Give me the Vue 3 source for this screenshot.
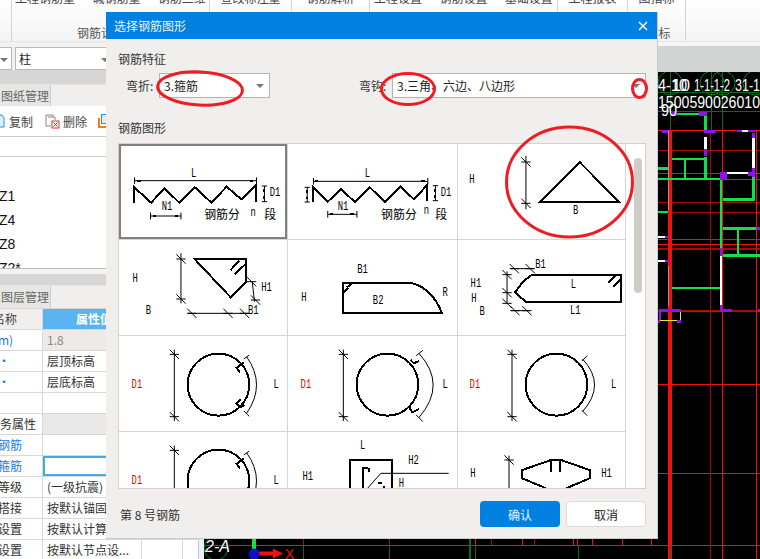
<template>
  <div class="app">
    <!-- ribbon -->
    <div class="ribbon">
      <div v-for="g in ribbon" :key="g.cls" class="rgroup" :class="g.cls">
        <div class="rtop">{{ g.top }}</div>
        <div class="rlabel">{{ g.label }}</div>
      </div>
    </div>

    <div class="main">
      <!-- left panel -->
      <div class="side">
        <div class="selects">
          <div class="sbox first"><i class="caret"></i></div>
          <div class="sbox second">柱<i class="caret"></i></div>
        </div>
        <div class="band"></div>
        <div class="tabrow"><div class="tab">图纸管理</div></div>
        <div class="tools">
          <svg class="ticon" width="5" height="14" viewBox="0 0 5 14"><path d="M-4 1H2L4 4V13H-4Z" fill="#dff0fb" stroke="#2a8fd0"/></svg>
          <span class="tlabel copy">复制</span>
          <svg class="ticon del" width="15" height="15" viewBox="0 0 15 15">
            <path d="M1 1H8V3H10V6M1 1V12H6M3 3H8" fill="none" stroke="#888"/>
            <rect x="7" y="7" width="7" height="7" fill="#fff" stroke="#d33"/>
            <path d="M8.5 8.5L12.500 12.500M12.500 8.5L8.500 12.500" stroke="#d33"/>
          </svg>
          <span class="tlabel">删除</span>
          <svg class="ticon next" width="9" height="14" viewBox="0 0 9 14">
            <path d="M1 4V13H8" fill="none" stroke="#f08010" stroke-width="2"/>
            <rect x="3.500" y="0.500" width="6" height="9" fill="#dff0fb" stroke="#2a8fd0"/>
          </svg>
        </div>
        <div class="blank"></div>
        <div class="list">
          <div v-for="n in names" :key="n" class="litem">{{ n }}</div>
        </div>
        <div class="listend"></div>
        <div class="band small"></div>
        <div class="tabrow second"><div class="tab">图层管理</div></div>
        <div class="table">
          <div v-for="(r, i) in rows" :key="i" class="trow" :class="r.cls">
            <div class="c1" :class="r.c1">{{ r.a }}</div>
            <div class="c2" :class="r.c2">{{ r.b }}</div>
            <div class="c3"></div>
            <div class="c4"></div>
          </div>
        </div>
      </div>

      <div class="gap"></div>

      <!-- drawing area -->
      <div class="right">
        <div class="strip"></div>
        <svg class="canvas" width="556" height="487" viewBox="204 72 556 487">
          <circle v-for="c in hex" :key="c[0]" :cx="c[0]" :cy="c[1]" r="12" fill="none" stroke="#0c7a1c" />
          <line v-for="(l, i) in lines" :key="'l' + i" :x1="l[0]" :y1="l[1]" :x2="l[2]" :y2="l[3]" :stroke="l[4]" :stroke-width="l[5] || 1" shape-rendering="crispEdges" />
          <rect v-for="(r, i) in blocks" :key="'r' + i" :x="r[0]" :y="r[1]" :width="r[2] - r[0]" :height="r[3] - r[1]" :fill="r[4]" />
          <text v-for="(t, i) in cadText" :key="'t' + i" :x="t[0]" :y="t[1]" class="cadtext" :textLength="t[3]" lengthAdjust="spacingAndGlyphs">{{ t[2] }}</text>
          <text x="205" y="552" class="cadtext italic">2-A</text>
          <rect x="252" y="539" width="4" height="11" fill="#18e040" />
          <path d="M259 551.500H273V548.500L283 553.500L273 558.500V555.500H259Z" fill="#f01010" />
          <circle cx="254" cy="554" r="5.500" fill="#1010c8" />
          <text x="285" y="559" class="axis">X</text>
        </svg>
      </div>
    </div>

    <!-- dialog -->
    <div class="dialog">
      <div class="dhead">
        <span>选择钢筋图形</span>
        <svg width="10" height="10" viewBox="0 0 10 10" class="close"><path d="M1 1L9 9M9 1L1 9" stroke="#fff" stroke-width="1.500" /></svg>
      </div>
      <div class="dtitle">钢筋特征</div>
      <div class="drow">
        <div class="field">
          <label>弯折:</label>
          <div class="combo short">3.箍筋<i class="caret"></i></div>
        </div>
        <div class="field">
          <label>弯钩:</label>
          <div class="combo long">3.三角、六边、八边形<i class="caret"></i></div>
        </div>
      </div>
      <div class="dtitle second">钢筋图形</div>
      <div class="frame">
        <div class="grid">
          <div v-for="(c, i) in cells" :key="i" class="cell" :class="{ sel: i === 0 }">
            <svg width="100%" height="96" :viewBox="c.vb" preserveAspectRatio="none">
              <path :d="c.thin" class="thin" />
              <path :d="c.thick" class="thick" />
              <circle v-if="c.circle" :cx="c.circle[0]" :cy="c.circle[1]" r="93" class="thick" />
              <text v-for="l in c.labels" :key="l.t + l.x" :x="l.x" :y="l.y" class="lbl" :class="{ red: c.circle && l.t === 'D1' }"
                :textLength="l.t.length * 16" lengthAdjust="spacingAndGlyphs">{{ l.t }}</text>
              <text v-for="z in c.zh" :key="z.t + z.x" :x="z.x" :y="z.y" class="zh">{{ z.t }}</text>
            </svg>
          </div>
        </div>
        <div class="sbar"><div class="thumb"></div></div>
      </div>
      <div class="dfoot">
        <span class="count">第 8 号钢筋</span>
        <div class="btns">
          <button class="btn ok">确认</button>
          <button class="btn cancel">取消</button>
        </div>
      </div>
    </div>

    <!-- red marks drawn over the screenshot -->
    <svg class="marks" width="760" height="559" viewBox="0 0 760 559">
      <ellipse cx="200" cy="88.500" rx="42.500" ry="16.500" transform="rotate(3 200 88.500)" />
      <ellipse cx="408" cy="89" rx="26.500" ry="15.500" />
      <ellipse cx="639.500" cy="88.500" rx="7" ry="9" />
      <ellipse cx="569.500" cy="182" rx="63" ry="55" />
    </svg>
  </div>
</template>

<script setup>
const ribbon = [
  { cls: 'g1', top: '', label: '' },
  { cls: 'g2', top: '工程钢筋量 · 碱钢筋量 · 钢筋三维', label: '钢筋计算' },
  { cls: 'g3', top: '查改标注量', label: '' },
  { cls: 'g4', top: '钢筋解析', label: '' },
  { cls: 'g5', top: '工程设置 · 钢筋设置 · 基础设置', label: '' },
  { cls: 'g6', top: '工程报表', label: '' },
  { cls: 'g7', top: '图指标', label: '指标' }
]

const names = ['Z1', 'Z4', 'Z8', 'Z2*']

const rows = [
  { a: '名称', b: '属性值', cls: 'head', c2: 'hv', c1: 'in7' },
  { a: 'm)', b: '1.8', c1: 'blue', c2: 'dim' },
  { a: '·', b: '层顶标高', c1: 'blue' },
  { a: '·', b: '层底标高', c1: 'blue' },
  { a: '', b: '' },
  { a: '务属性', b: '', c1: 'in0', c2: 'grey' },
  { a: '纵钢筋', b: '', c1: 'blue clip' },
  { a: '纵箍筋', b: '', c1: 'blue clip', c2: 'active' },
  { a: '等级', b: '(一级抗震)' },
  { a: '搭接', b: '按默认锚固搭接' },
  { a: '设置', b: '按默认计算设置' },
  { a: '设置', b: '按默认节点设...' }
]

// tick mark used on dimension lines
const tk = (x, y) => `M${x - 14} ${y}H${x + 14}M${x - 14} ${y - 14}L${x + 14} ${y + 14}`
const cap = (x, y) => `M${x} ${y - 10}V${y + 10}`
const capH = (x, y) => `M${x - 8} ${y}H${x + 8}`

const lab = (t, x, y) => ({ t, x, y })

const cells = [
  {
    vb: '3 12 507 288',
    thick: 'M47 190V140L100 188L140 145L185 188L232 142L282 188L328 140L372 178L416 135V185M58 122H68M397 122H407M107 228H116M172 228H182M442 146V156M442 168V178',
    thin: `M50 122H418${cap(50, 122)}${cap(418, 122)}M442 138V185${capH(442, 138)}${capH(442, 185)}M98 228H190${cap(98, 228)}${cap(190, 228)}`,
    labels: [lab('L', 228, 110), lab('D1', 474, 167), lab('N1', 148, 210), lab('n', 408, 228)],
    zh: [{ t: '钢筋分', x: 260, y: 236 }, { t: '段', x: 441, y: 236 }]
  },
  {
    vb: '510 12 510 288',
    thick: 'M585 185V140L630 185L670 148L712 186L757 142L802 186L850 140L890 178L930 135V182M592 124H602M912 124H922M638 223H647M698 223H708M568 150V158M568 170V178M955 146V156M955 165V175',
    thin: `M587 124H932${cap(587, 124)}${cap(932, 124)}M955 137V182${capH(955, 137)}${capH(955, 182)}M568 142V186${capH(568, 142)}${capH(568, 186)}M630 223H718${cap(630, 223)}${cap(718, 223)}`,
    labels: [lab('L', 750, 112), lab('D1', 987, 167), lab('N1', 676, 210), lab('n', 928, 222)],
    zh: [{ t: '钢筋分', x: 791, y: 236 }, { t: '段', x: 954, y: 236 }]
  },
  {
    vb: '54 12 504 288',
    thick: 'M302 186L422 67L540 186Z',
    thin: `M259 48V208${tk(259, 66)}${tk(259, 190)}`,
    labels: [lab('H', 96, 129), lab('B', 409, 221)]
  },
  {
    vb: '3 300 507 288',
    thick: 'M230 356H385V428L340 472ZM340 390L365 362M352 403L385 372',
    thin: `M190 340V490${tk(190, 357)}${tk(190, 477)}M210 520H395${tk(223, 520)}${tk(332, 520)}${tk(382, 520)}M405 425L412 485${tk(403, 425)}${tk(415, 480)}`,
    labels: [lab('H', 52, 426), lab('H1', 448, 452), lab('B', 92, 522), lab('B1', 408, 522)]
  },
  {
    vb: '510 300 510 288',
    thick: 'M675 430H885Q945 445 975 520H675ZM678 458L692 444M688 442L703 430',
    thin: '',
    labels: [lab('B1', 735, 400), lab('H', 558, 484), lab('B2', 782, 492), lab('R', 984, 468)]
  },
  {
    vb: '54 300 504 288',
    thick: 'M276 405H546V485H258L226 457L250 425ZM508 428L530 407M522 440L545 418',
    thin: `M214 386H282${tk(224, 386)}${tk(272, 386)}M202 394V490${tk(202, 404)}${tk(202, 458)}${tk(202, 490)}M214 512H270${tk(226, 512)}${tk(262, 512)}`,
    labels: [lab('B1', 303, 384), lab('H1', 108, 442), lab('H', 102, 486), lab('B', 127, 526), lab('L', 402, 445), lab('L1', 408, 522)]
  },
  {
    vb: '3 3 507 288',
    circle: [303, 149],
    thick: 'M381 82L358 98L368 113M370 192L357 205L368 217L381 210',
    thin: `M170 44V258${tk(170, 58)}${tk(170, 245)}M388 65Q448 149 388 235M380 72L396 60M380 228L396 244`,
    labels: [lab('D1', 57, 159), lab('L', 477, 159)]
  },
  {
    vb: '510 3 510 288',
    circle: [810, 149],
    thick: 'M880 75L890 85L905 78M875 215L885 232L905 222',
    thin: `M677 44V258${tk(677, 58)}${tk(677, 245)}M905 55Q991 149 905 248M897 62L917 46M897 240L917 260`,
    labels: [lab('D1', 564, 159), lab('L', 984, 159)]
  },
  {
    vb: '54 3 504 288',
    circle: [351, 149],
    thick: '',
    thin: `M217 44V258${tk(217, 58)}${tk(217, 245)}M430 72Q502 149 430 230M428 78L444 62M428 226L444 242`,
    labels: [lab('D1', 105, 159), lab('L', 524, 159)]
  },
  {
    vb: '3 291 507 288',
    circle: [303, 437],
    thick: 'M381 370L358 386L368 401',
    thin: `M170 332V480${tk(170, 346)}M388 353Q448 437 388 523M380 360L396 348`,
    labels: [lab('D1', 57, 447), lab('L', 477, 447)]
  },
  {
    vb: '510 291 510 288',
    thick: 'M697 480V375H825V480M735 480V398H750M755 400V410M782 443H795M800 452V462',
    thin: 'M750 460L790 415H995',
    labels: [lab('L', 735, 343), lab('H1', 570, 435), lab('H2', 889, 387), lab('H', 852, 455)]
  },
  {
    vb: '54 291 504 288',
    thick: 'M320 460L248 430V405L335 375H365L451 405V430L380 460M335 375V410M363 375V410',
    thin: `M208 362V480${tk(208, 375)}`,
    labels: [lab('H', 99, 425), lab('H1', 502, 425)]
  }
]

const RED = '#f01010'
const DARK = '#a80808'
const GRN = '#10e050'
const DGRN = '#0c6a1a'
const PUR = '#9010f0'

const hex = [[670, 83], [712, 83], [723, 83], [755, 83], [216, 548]]

const lines = [
  [658, 92, 760, 92, DGRN], [658, 111, 760, 111, DGRN],
  [670, 72, 670, 130, DGRN], [711, 72, 711, 130, DGRN], [722, 72, 722, 130, DGRN],
  [658, 130.500, 760, 130.500, RED], [658, 150.500, 760, 150.500, DARK], [658, 173.500, 760, 173.500, RED],
  [658, 179.500, 760, 179.500, RED], [658, 202.500, 760, 202.500, DARK], [658, 212.500, 760, 212.500, DARK],
  [658, 239.500, 760, 239.500, RED], [658, 244.500, 760, 244.500, RED], [658, 248.500, 760, 248.500, DARK, 2],
  [658, 310.500, 760, 310.500, DARK, 2], [658, 384.500, 760, 384.500, RED], [658, 473.500, 760, 473.500, RED],
  [204, 545.500, 760, 545.500, RED],
  [670, 130, 670, 559, RED, 4], [710.500, 130, 710.500, 559, DARK], [722.500, 130, 722.500, 559, RED], [756.500, 130, 756.500, 559, RED],
  [668.500, 130, 668.500, 210, '#999'], [668.500, 266, 668.500, 306, '#999'],
  [303.500, 539, 303.500, 545, DARK], [389.500, 539, 389.500, 545, DARK],
  [303.500, 546, 303.500, 559, DGRN], [389.500, 546, 389.500, 559, DGRN],
  [469.500, 539, 469.500, 559, DGRN, 2], [475.500, 546, 475.500, 559, DGRN], [578.500, 546, 578.500, 559, DGRN], [670.500, 546, 670.500, 559, DGRN],
  [475.500, 539, 475.500, 545, RED], [491.500, 539, 491.500, 545, DARK], [522.500, 539, 522.500, 545, RED], [534.500, 539, 534.500, 545, DARK],
  [573.500, 539, 573.500, 545, RED], [577.500, 539, 577.500, 545, RED], [592.500, 539, 592.500, 545, RED], [622.500, 539, 622.500, 545, RED], [651.500, 539, 651.500, 545, RED]
]

const blocks = [
  [672, 112, 677, 116, PUR], [677, 113, 699, 115, GRN], [699, 112, 707, 116, PUR],
  [704, 116, 707, 130, GRN], [662, 130, 668, 133, PUR], [704, 130, 716, 133, PUR], [737, 130, 742, 132, PUR], [742, 130, 748, 132, '#fff'], [748, 130, 755, 132, PUR],
  [704, 137, 707, 149, '#fff'], [704, 149, 707, 156, PUR], [704, 157, 707, 178, GRN],
  [672, 158, 705, 160, GRN], [684, 159, 686, 178, GRN], [658, 167, 668, 170, GRN], [658, 178, 720, 180, GRN],
  [752, 133, 755, 138, PUR], [752, 138, 755, 168, '#fff'], [752, 168, 755, 177, PUR], [752, 177, 755, 198, GRN],
  [723, 198, 755, 201, GRN], [720, 180, 722, 248, GRN], [727, 172, 748, 174, '#fff'], [720, 172, 727, 180, PUR], [748, 172, 755, 176, PUR],
  [658, 211, 668, 213, GRN], [723, 227, 756, 230, GRN], [756, 227, 760, 230, PUR], [737, 230, 739, 255, GRN], [723, 254, 760, 257, GRN],
  [720, 248, 722, 256, PUR], [720, 256, 722, 305, '#fff'], [720, 305, 722, 310, PUR],
  [658, 236, 665, 238, '#fff'], [665, 236, 669, 238, PUR], [658, 260, 665, 262, '#fff'], [665, 260, 669, 262, PUR],
  [672, 287, 720, 289, GRN], [659, 309, 681, 312, PUR], [720, 309, 732, 312, PUR], [758, 309, 760, 312, PUR],
  [681, 311, 720, 312, DGRN], [659, 312, 661, 320, PUR], [660, 320, 677, 321, '#f0e820'], [680, 312, 681, 320, '#f0e820'], [677, 320, 681, 323, PUR], [658, 320, 660, 323, PUR]
]

const cadText = [
  [658, 91, '4-10', 29], [672, 91, '10', 18], [694, 91, '1-1-1-2', 36], [735, 91, '31-1', 25],
  [658, 108, '1500590026010', 102], [661, 116, '90', 16]
]
</script>

<style scoped>
.app {
  position: relative;
  width: 760px;
  height: 559px;
  overflow: hidden;
  background: #f0f0f0;
  font-family: "Noto Sans CJK SC", "Liberation Sans", sans-serif;
  font-size: 12px;
  color: #333;
}

/* ribbon */
.ribbon {
  display: flex;
  height: 42px;
  box-sizing: border-box;
  background: linear-gradient(#fff, #f4f4f4);
  border-bottom: 1px solid #e4e4e4;
  overflow: hidden;
}
.rgroup {
  box-sizing: border-box;
  border-right: 1px solid #d4d4d4;
  height: 41px;
  text-align: center;
  white-space: nowrap;
  overflow: hidden;
  flex: none;
}
.g1 { width: 12px; }
.g2 { width: 198px; }
.g3 { width: 82px; }
.g4 { width: 78px; }
.g5 { width: 188px; }
.g6 { width: 70px; }
.g7 { width: 58px; }
.rtop {
  height: 26px;
  margin-top: -12px;
  line-height: 20px;
  color: #444;
}
.rlabel {
  margin-top: 11px;
  line-height: 16px;
  color: #555;
}
.g2 .rlabel { text-align: left; padding-left: 65px; }
.g7 .rlabel { padding-left: 4px; }

.main {
  display: flex;
  height: 517px;
}

/* left panel */
.side {
  width: 199px;
  flex: none;
  display: flex;
  flex-direction: column;
  background: #fff;
  border-right: 1px solid #c4ccd4;
  box-sizing: border-box;
  overflow: hidden;
}
.selects {
  display: flex;
  gap: 3px;
  height: 28px;
  box-sizing: border-box;
  padding-top: 5px;
  background: #f2f2f2;
}
.sbox {
  position: relative;
  height: 23px;
  line-height: 21px;
  box-sizing: border-box;
  border: 1px solid #b8b8b8;
  background: #fff;
  color: #222;
}
.sbox.first { width: 12px; border-left: 0; }
.sbox.second { width: 96px; padding-left: 3px; }
.sbox .caret { right: 1px; }
.sbox.first .caret { right: 3px; }
.caret {
  position: absolute;
  right: 5px;
  top: 10px;
  border: 4px solid transparent;
  border-top: 4px solid #777;
  border-bottom: 0;
}
.band {
  height: 14px;
  background: #d6d6d6;
}
.band.small { height: 11px; }
.tabrow {
  display: flex;
  height: 22px;
  background: #f0efee;
  border-top: 1px solid #e4e4e4;
  box-sizing: border-box;
}
.tabrow.second { height: 23px; }
.tab {
  width: 50px;
  text-indent: 1px;
  line-height: 21px;
  white-space: nowrap;
  overflow: hidden;
  background: #e6e6e4;
  border-right: 1px solid #ccc;
  color: #666;
}
.tools {
  display: flex;
  align-items: center;
  height: 31px;
  box-sizing: border-box;
  border-bottom: 1px solid #ccc;
  background: #fff;
}
.ticon { flex: none; }
.tlabel { color: #444; }
.copy { margin-left: 4px; }
.del { margin-left: 12px; margin-right: 3px; }
.next { margin-left: 11px; }
.blank {
  height: 20px;
  border-bottom: 1px solid #ccc;
  box-sizing: border-box;
}
.list {
  height: 112px;
  overflow: hidden;
  border-bottom: 1px solid #bbb;
  box-sizing: border-box;
  padding-top: 27px;
}
.litem {
  height: 24px;
  line-height: 24px;
  font-family: "Liberation Sans", sans-serif;
  font-size: 14px;
  text-indent: -1px;
  color: #111;
}
.listend {
  height: 5px;
  background: #f4f4f4;
}
.table {
  flex: 1;
  overflow: hidden;
  border-top: 1px solid #d4d4d4;
}
.trow {
  display: flex;
  height: 21px;
  box-sizing: border-box;
  border-bottom: 1px solid #d8d8d8;
  line-height: 20px;
  color: #333;
}
.trow > div {
  box-sizing: border-box;
  flex: none;
  white-space: nowrap;
  overflow: hidden;
  height: 20px;
}
.c1 { width: 43px; border-right: 1px solid #d8d8d8; text-indent: -2px; }
.c2 { width: 99px; padding-left: 4px; border-right: 1px solid #d8d8d8; }
.c3 { width: 41px; border-right: 1px solid #d8d8d8; }
.c4 { width: 15px; }
.blue { color: #1878e8; }
.c1.clip { text-indent: -14px; }
.c1.in7 { text-indent: -7px; }
.c1.in0 { text-indent: 0; }
.head .c1 { background: #f0efee; color: #444; }
.trow .hv {
  background: #5ab4f2;
  color: #fff;
  font-weight: 700;
  text-align: center;
}
.trow .dim { background: #ecebe9; color: #888; }
.trow .grey { background: #e9e9e9; }
.trow .active { box-shadow: inset 0 0 0 2px #4aa8e0; }

.gap {
  width: 5px;
  flex: none;
  background: #eef0f2;
}

/* right side */
.right {
  width: 556px;
  flex: none;
  display: flex;
  flex-direction: column;
}
.strip {
  height: 30px;
  background: #d2d4d4;
  border-top: 4px solid #f6f6f6;
  box-sizing: border-box;
}
.canvas {
  display: block;
  background: #000;
}
.cadtext {
  fill: #fff;
  font-family: "Liberation Sans", sans-serif;
  font-size: 16px;
}
.cadtext.italic { font-style: italic; }
.axis {
  fill: #f01010;
  font-family: "Liberation Sans", sans-serif;
  font-size: 14px;
}

/* dialog */
.dialog {
  position: absolute;
  left: 106px;
  top: 12px;
  width: 552px;
  height: 527px;
  box-sizing: border-box;
  background: #f0efee;
  border-right: 1px solid #c8ccd0;
  border-bottom: 1px solid #c8ccd0;
  display: flex;
  flex-direction: column;
}
.dhead {
  height: 27px;
  flex: none;
  display: flex;
  align-items: center;
  justify-content: space-between;
  padding: 0 9px 0 8px;
  background: #0080e0;
  color: #e8f4ff;
}
.dtitle {
  margin: 11px 0 0 12px;
  height: 18px;
  line-height: 18px;
  color: #333;
}
.dtitle.second { margin-top: 21px; }
.drow {
  display: flex;
  justify-content: space-between;
  margin-top: 5px;
  padding: 0 11px 0 20px;
}
.field {
  display: flex;
  align-items: center;
}
.field label { width: 33px; color: #333; }
.combo {
  position: relative;
  height: 25px;
  line-height: 23px;
  box-sizing: border-box;
  border: 1px solid #b4b4b4;
  background: #fff;
  padding-left: 4px;
  color: #222;
}
.combo.short { width: 111px; }
.combo.long { width: 254px; }
.frame {
  display: flex;
  margin: 6px 0 0 12px;
  width: 528px;
  height: 346px;
  flex: none;
  box-sizing: border-box;
  border: 1px solid #d4d1cc;
  background: #fff;
}
.grid {
  display: grid;
  grid-template-columns: 169px 170px 168px;
  grid-auto-rows: 96px;
  height: 344px;
  overflow: hidden;
}
.cell {
  position: relative;
  box-sizing: border-box;
  border-right: 1px solid #d8d5d0;
  border-bottom: 1px solid #d8d5d0;
  overflow: hidden;
}
.cell svg { display: block; }
.cell.sel::after {
  content: "";
  position: absolute;
  inset: 0;
  border: 2px solid #808080;
}
.thick {
  fill: none;
  stroke: #000;
  stroke-width: 6;
  shape-rendering: crispEdges;
}
.thin {
  fill: none;
  stroke: #000;
  stroke-width: 3;
  shape-rendering: crispEdges;
}
.lbl {
  font-family: "Liberation Mono", monospace;
  font-size: 38px;
  text-anchor: middle;
  fill: #000;
}
.lbl.red { fill: #f00000; }
.zh {
  font-family: "Noto Sans CJK SC", sans-serif;
  font-size: 36px;
  fill: #000;
}
.sbar {
  width: 19px;
  flex: none;
}
.thumb {
  width: 8px;
  height: 135px;
  margin: 14px 0 0 8px;
  border-radius: 4px;
  background: #cfcdc7;
}
.dfoot {
  flex: 1;
  display: flex;
  align-items: center;
  justify-content: space-between;
  padding: 1px 11px 0 14px;
}
.count { color: #333; }
.btns {
  display: flex;
  gap: 6px;
}
.btn {
  width: 80px;
  height: 26px;
  box-sizing: border-box;
  padding: 0;
  border-radius: 4px;
  font-family: inherit;
  font-size: 12px;
}
.ok {
  border: 0;
  background: #0080e0;
  color: #e8f4ff;
}
.cancel {
  border: 1px solid #dcdad6;
  background: #fff;
  color: #222;
}

/* annotations */
.marks {
  position: absolute;
  left: 0;
  top: 0;
  pointer-events: none;
}
.marks ellipse {
  fill: none;
  stroke: #f01c24;
  stroke-width: 3;
}
</style>
